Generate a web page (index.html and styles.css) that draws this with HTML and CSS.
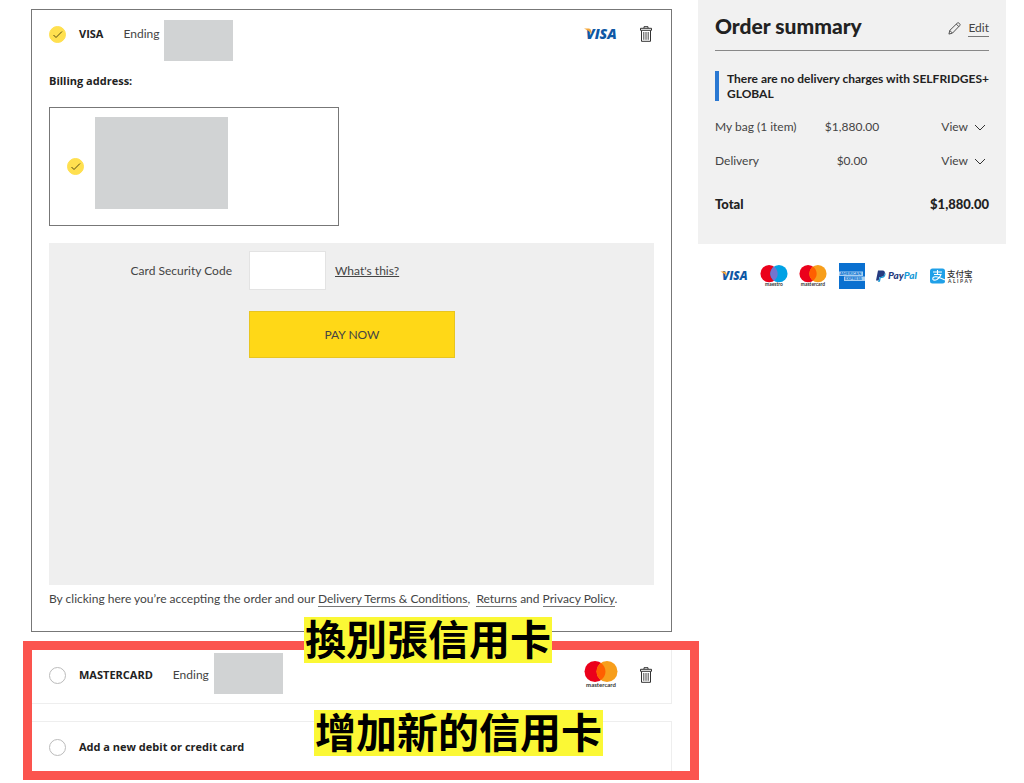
FILE: index.html
```html
<!DOCTYPE html>
<html lang="en">
<head>
  <meta charset="UTF-8">
  <meta name="viewport" content="width=device-width, initial-scale=1.0">
  <title>Checkout - Payment</title>
  <link rel="stylesheet" href="styles.css">
</head>
<body>
  <!-- Shared icons -->
  <svg class="sprite" aria-hidden="true">
    <symbol id="trash" viewBox="0 0 12 16">
      <g fill="none" stroke="#333">
        <path d="M4 2V.7h4V2M.5 2.300h11v2H.5z"/>
        <path d="M1.500 4.500v10.800h9V4.500"/>
        <path d="M3.800 6v7.800M6 6v7.800M8.200 6v7.800" stroke-width=".9"/>
      </g>
    </symbol>
    <symbol id="chevron" viewBox="0 0 12 7">
      <path d="M1 1l5 5 5-5" fill="none" stroke="#333"/>
    </symbol>
  </svg>

  <div class="page">
    <main>
      <section class="card card-selected">
        <div class="card-row">
          <input type="radio" name="card" id="card-visa" class="tick" checked>
          <label for="card-visa" class="card-name">VISA</label>
          <span class="ending">Ending<span class="mask mask-low"></span></span>
          <svg class="logo-visa" viewBox="0 0 34 24" role="img" aria-label="Visa">
            <text x="2" y="17" font-family="Open Sans, sans-serif" font-size="14" font-weight="800" font-style="italic" fill="#0f58a5">VISA</text>
            <path d="M0 6.500h5q1.500 0 1.900 1.500l.9 4Q5 8.500 0 6.500z" fill="#f4a73a"/>
          </svg>
          <button class="icon-button" aria-label="Delete card"><svg class="trash"><use href="#trash"/></svg></button>
        </div>

        <h2 class="billing-title">Billing address:</h2>
        <div class="address">
          <input type="radio" name="address" class="tick" aria-label="Billing address" checked>
          <div class="address-mask"></div>
        </div>

        <form class="security">
          <label for="csc">Card Security Code</label>
          <div class="csc-field">
            <input type="text" id="csc" class="csc">
            <a href="#" class="whats-this">What's this?</a>
          </div>
          <button type="button" class="pay">PAY NOW</button>
        </form>

        <p class="terms">By clicking here you’re accepting the order and our <a href="#">Delivery Terms &amp; Conditions</a>,&nbsp; <a href="#">Returns</a> and <a href="#">Privacy Policy</a>.</p>
      </section>

      <div class="other-cards">
        <section class="card">
          <div class="card-row">
            <input type="radio" name="card" id="card-mc" class="tick">
            <label for="card-mc" class="card-name">MASTERCARD</label>
            <span class="ending">Ending<span class="mask"></span></span>
            <svg class="logo-mc" viewBox="0 0 34 28" role="img" aria-label="Mastercard">
              <circle cx="11" cy="10.500" r="10.500" fill="#eb001b"/>
              <circle cx="23" cy="10.500" r="10.500" fill="#f79e1b"/>
              <path d="M17 1.900a10.500 10.500 0 0 1 0 17.200a10.500 10.500 0 0 1 0-17.200z" fill="#ff5f00"/>
              <text x="17" y="26" text-anchor="middle" font-family="Lato, sans-serif" font-size="6" font-weight="700" fill="#333">mastercard</text>
            </svg>
            <button class="icon-button" aria-label="Delete card"><svg class="trash"><use href="#trash"/></svg></button>
          </div>
        </section>
        <section class="card">
          <div class="card-row">
            <input type="radio" name="card" id="card-new" class="tick">
            <label for="card-new" class="card-name">Add a new debit or credit card</label>
          </div>
        </section>

        <!-- Notes drawn over the cards -->
        <div class="frame"></div>
        <span class="note note-change" lang="zh-Hant">換別張信用卡</span>
        <span class="note note-add" lang="zh-Hant">增加新的信用卡</span>
      </div>
    </main>

    <aside>
      <div class="summary">
        <div class="summary-head">
          <h1>Order summary</h1>
          <svg class="pencil" viewBox="0 0 14 14"><path d="M1 13l1-4L10 1.200q1-.8 2 .1l.6.600q.9 1 0 2L4.800 12zM9 2.300l2.700 2.700M2 9.200l2.600 2.600" fill="none" stroke="#444"/></svg>
          <a href="#" class="edit">Edit</a>
        </div>
        <p class="notice">There are no delivery charges with SELFRIDGES+ GLOBAL</p>
        <div class="line">
          <span>My bag (1 item)</span>
          <span>$1,880.00</span>
          <button class="view">View <svg class="chevron"><use href="#chevron"/></svg></button>
        </div>
        <div class="line">
          <span>Delivery</span>
          <span>$0.00</span>
          <button class="view">View <svg class="chevron"><use href="#chevron"/></svg></button>
        </div>
        <div class="total">
          <span>Total</span>
          <span>$1,880.00</span>
        </div>
      </div>

      <div class="payments">
        <svg width="29" height="20" viewBox="0 0 34 24" role="img" aria-label="Visa">
          <text x="2" y="17" font-family="Open Sans, sans-serif" font-size="14" font-weight="800" font-style="italic" fill="#0f58a5">VISA</text>
          <path d="M0 6.500h5q1.500 0 1.900 1.500l.9 4Q5 8.500 0 6.500z" fill="#f4a73a"/>
        </svg>
        <svg width="28" height="23" viewBox="0 0 34 28" role="img" aria-label="Maestro">
          <circle cx="11" cy="10.500" r="10.500" fill="#eb001b"/>
          <circle cx="23" cy="10.500" r="10.500" fill="#00a2e5"/>
          <path d="M17 1.900a10.500 10.500 0 0 1 0 17.200a10.500 10.500 0 0 1 0-17.200z" fill="#7375cf"/>
          <text x="17" y="26" text-anchor="middle" font-family="Lato, sans-serif" font-size="6" font-weight="700" fill="#333">maestro</text>
        </svg>
        <svg width="28" height="23" viewBox="0 0 34 28" role="img" aria-label="Mastercard">
          <circle cx="11" cy="10.500" r="10.500" fill="#eb001b"/>
          <circle cx="23" cy="10.500" r="10.500" fill="#f79e1b"/>
          <path d="M17 1.900a10.500 10.500 0 0 1 0 17.200a10.500 10.500 0 0 1 0-17.200z" fill="#ff5f00"/>
          <text x="17" y="26" text-anchor="middle" font-family="Lato, sans-serif" font-size="6" font-weight="700" fill="#333">mastercard</text>
        </svg>
        <svg width="26" height="26" viewBox="0 0 26 26" role="img" aria-label="American Express">
          <rect width="26" height="26" fill="#0a70d0"/>
          <rect y="8.500" width="24" height="4.500" fill="#a9d0f3"/>
          <rect x="5" y="13.500" width="21" height="4.500" fill="#a9d0f3"/>
          <g font-family="Lato, sans-serif" font-size="4" font-weight="900" fill="#0a70d0">
            <text x="1" y="12.200">AMERICAN</text>
            <text x="6" y="17.200">EXPRESS</text>
          </g>
        </svg>
        <svg width="43" height="14" viewBox="0 0 43 14" role="img" aria-label="PayPal">
          <path d="M2 1.500h4.500q3 .2 2.300 3.300Q8 8 4.600 8H3.400L2.700 11.500H0z" fill="#253b80"/>
          <path d="M9 3.500q.8 1 .4 2.600Q8.600 9 5.600 9H4.700L4 12.700H1.900l.2-1.200h.8L3.600 8h1.200Q8.500 7.800 9 3.500z" fill="#179bd7"/>
          <text x="12" y="10" font-family="Lato, sans-serif" font-size="10" font-weight="900" font-style="italic" fill="#253b80">Pay<tspan fill="#179bd7">Pal</tspan></text>
        </svg>
        <svg width="43" height="16" viewBox="0 0 43 16" role="img" aria-label="Alipay">
          <rect y="0.500" width="15" height="15" rx="2.500" fill="#1fa0e8"/>
          <path d="M3 4h9M7.500 2v4.500M4 6.500h7Q10 9.500 7 11.500Q4 13 2.800 11.200Q2.500 8.500 6 8.800Q9 9.200 15 12" fill="none" stroke="#fff" stroke-width="1.100"/>
          <text x="17" y="8.500" font-family="Noto Sans CJK SC, sans-serif" font-size="8.500" font-weight="500" fill="#333">支付宝</text>
          <text x="18" y="15" font-family="Lato, sans-serif" font-size="5" font-weight="700" letter-spacing="1.500" fill="#444">ALIPAY</text>
        </svg>
      </div>
    </aside>
  </div>
</body>
</html>
```

FILE: styles.css
```css
* {
  box-sizing: border-box;
}

body {
  margin: 0;
  background-color: #fff;
  color: #444;
  font-family: Lato, "Liberation Sans", sans-serif;
  font-size: 12px;
  line-height: 16px;
}

h1, h2, p {
  margin: 0;
}

a {
  color: inherit;
}

button {
  padding: 0;
  border: none;
  background: none;
  color: inherit;
  font: inherit;
  cursor: pointer;
}

svg {
  display: block;
}

.sprite {
  position: absolute;
  width: 0;
  height: 0;
}

.page {
  display: grid;
  grid-template-columns: minmax(0, 1fr) 308px;
  gap: 26px;
  padding: 0 18px 7px 31px;
}

main {
  padding-top: 9px;
}

/* Saved cards */
.card {
  padding: 16px 17px;
  border: 1px solid #eee;
}

.card-selected {
  padding-bottom: 24px;
  border-color: #777;
}

.card-row {
  display: flex;
  align-items: center;
  height: 16px;
}

.tick {
  appearance: none;
  flex: none;
  width: 17px;
  height: 17px;
  margin: 0;
  border: 1px solid #bbb;
  border-radius: 50%;
  background-color: #fff;
}

.tick:checked {
  border-color: #ffe04f;
  background: #ffe04f url("data:image/svg+xml,%3Csvg xmlns='http://www.w3.org/2000/svg' viewBox='0 0 15 15'%3E%3Cpath d='M3.500 8l2.500 2.500 6-6' fill='none' stroke='%23554a10'/%3E%3C/svg%3E");
}

.card-name,
.billing-title {
  color: #222;
  font-family: "Open Sans", "Liberation Sans", sans-serif;
  font-size: 11px;
  font-weight: 700;
}

.card-name {
  margin-left: 13px;
}

.ending {
  position: relative;
  margin-left: 20px;
}

.mask {
  position: absolute;
  left: 100%;
  bottom: -11px;
  width: 69px;
  height: 41px;
  margin-left: 5px;
  background-color: #d1d3d4;
}

.mask-low {
  bottom: -19px;
}

.logo-visa,
.logo-mc {
  width: 34px;
  height: 24px;
  margin-left: auto;
}

.logo-mc {
  height: 28px;
}

.icon-button {
  margin: 0 2px 0 22px;
}

.trash {
  width: 12px;
  height: 16px;
}

.billing-title {
  margin-top: 31px;
  line-height: 16px;
}

.address {
  display: flex;
  align-items: center;
  gap: 11px;
  width: 290px;
  max-width: 100%;
  height: 119px;
  margin-top: 18px;
  padding: 0 17px;
  border: 1px solid #777;
}

.address-mask {
  width: 133px;
  height: 92px;
  margin-bottom: 7px;
  background-color: #d1d3d4;
}

.security {
  display: grid;
  grid-template-columns: 183px 1fr;
  align-items: center;
  align-content: start;
  gap: 21px 17px;
  min-height: 342px;
  margin-top: 17px;
  padding-top: 8px;
  background-color: #efefef;
}

.security label {
  text-align: right;
}

.csc-field {
  display: flex;
  align-items: center;
  gap: 9px;
}

.csc {
  width: 77px;
  height: 39px;
  padding: 0 8px;
  border: 1px solid #e3e3e3;
  background-color: #fff;
  font: inherit;
}

.pay {
  grid-column: 2;
  width: 206px;
  height: 47px;
  border: 1px solid #e8c520;
  background-color: #ffd817;
}

.terms {
  margin-top: 6px;
}

.terms a,
.edit {
  border-bottom: 1px solid #777;
  text-decoration: none;
}

.other-cards {
  display: grid;
  gap: 17px;
  position: relative;
  margin-top: 17px;
}

.other-cards .card {
  padding: 17px 17px 20px;
}

/* Notes over the cards */
.frame {
  position: absolute;
  inset: -8px -27px -4px -8px;
  border: 9px solid #fb544e;
  pointer-events: none;
}

.note {
  position: absolute;
  padding: 0 1px 6px;
  background-color: #fbf835;
  color: #000;
  font-family: "Noto Sans CJK TC", sans-serif;
  font-size: 41px;
  font-weight: 700;
  line-height: 40px;
  white-space: nowrap;
}

.note-change {
  top: -32px;
  left: 273px;
}

.note-add {
  top: 61px;
  left: 283px;
}

/* Order summary */
.summary {
  padding: 14px 17px 32px;
  background-color: #f1f1f1;
}

.summary-head {
  display: flex;
  align-items: center;
  padding-bottom: 12px;
  border-bottom: 1px solid #888;
}

h1 {
  margin-right: auto;
  color: #222;
  font-size: 21px;
  font-weight: 900;
  line-height: 24px;
}

.pencil {
  width: 13px;
  height: 13px;
  margin: 5px 7px 0 0;
}

.edit {
  margin-top: 5px;
}

.notice {
  margin-top: 20px;
  padding-left: 8px;
  border-left: 4px solid #2a78d2;
  color: #222;
  font-weight: 700;
  line-height: 15px;
}

.line {
  display: grid;
  grid-template-columns: 1fr auto 1fr;
  margin-top: 18px;
}

.view {
  display: flex;
  align-items: center;
  justify-self: end;
  gap: 6px;
  margin-right: 3px;
}

.chevron {
  width: 12px;
  height: 7px;
}

.total {
  display: flex;
  justify-content: space-between;
  margin-top: 27px;
  color: #222;
  font-size: 13px;
  font-weight: 900;
}

.payments {
  display: flex;
  align-items: center;
  justify-content: space-between;
  padding: 19px 33px 0 22px;
}
```
